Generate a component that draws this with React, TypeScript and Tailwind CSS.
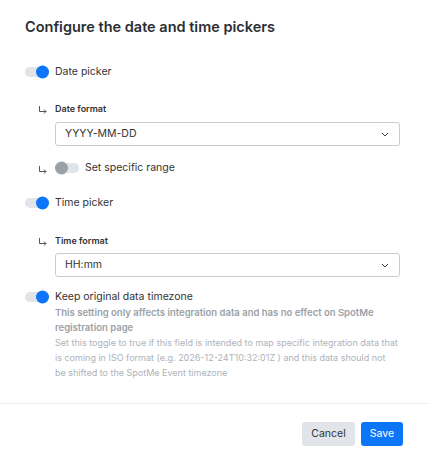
import React from "react";

function Toggle({ on }: { on: boolean }) {
  return (
    <div className="relative h-[10px] w-[24px] shrink-0 rounded-full bg-[#e1e4e8]">
      <div
        className={
          on
            ? "absolute right-0 top-1/2 h-[13px] w-[13px] -translate-y-1/2 rounded-full bg-[#0d75f8]"
            : "absolute left-0 top-1/2 h-[13px] w-[13px] -translate-y-1/2 rounded-full bg-[#9aa1a9]"
        }
      />
    </div>
  );
}

function Arrow() {
  return (
    <svg width="10" height="10" viewBox="0 0 10 10" className="mt-[3px] shrink-0 text-[#555]">
      <path d="M1.5 1 V6.5 H8 M6 4.5 L8 6.5 L6 8.5" fill="none" stroke="currentColor" strokeWidth="1" />
    </svg>
  );
}

function Select({ value }: { value: string }) {
  return (
    <div className="flex h-[24px] items-center justify-between rounded-[3px] border border-[#c9cdd2] bg-white pl-[9px] pr-[10px]">
      <span className="text-[10.5px] text-[#333]">{value}</span>
      <svg width="8" height="5" viewBox="0 0 8 5">
        <path d="M1 1 L4 4 L7 1" fill="none" stroke="#444" strokeWidth="1" />
      </svg>
    </div>
  );
}

export default function App() {
  return (
    <div
      className="h-[460px] w-[428px] bg-white text-[#333]"
      style={{ fontFamily: "Inter, 'Noto Sans', sans-serif" }}
    >
      <div className="px-[25px] pt-[17px]">
        <h1 className="text-[14.5px] font-semibold leading-[20px] text-[#2b2f33]">
          Configure the date and time pickers
        </h1>
        <div className="mt-[27px] flex items-center gap-[6px]">
          <Toggle on />
          <span className="text-[10.5px]">Date picker</span>
        </div>
        <div className="mt-[22px] flex items-center gap-[7px] pl-[13px]">
          <Arrow />
          <span className="text-[9px] font-semibold">Date format</span>
        </div>
        <div className="mt-[7px] pl-[30px] pr-[3px]">
          <Select value="YYYY-MM-DD" />
        </div>
        <div className="mt-[14px] flex items-center gap-[7px] pl-[13px]">
          <Arrow />
          <div className="flex items-center gap-[6px]">
            <Toggle on={false} />
            <span className="text-[10.5px]">Set specific range</span>
          </div>
        </div>
        <div className="mt-[19px] flex items-center gap-[6px]">
          <Toggle on />
          <span className="text-[10.5px]">Time picker</span>
        </div>
        <div className="mt-[23px] flex items-center gap-[7px] pl-[13px]">
          <Arrow />
          <span className="text-[9px] font-semibold">Time format</span>
        </div>
        <div className="mt-[6px] pl-[30px] pr-[3px]">
          <Select value="HH:mm" />
        </div>
        <div className="mt-[12px] flex items-center gap-[6px]">
          <Toggle on />
          <span className="text-[10.5px]">Keep original data timezone</span>
        </div>
        <div className="pl-[30px] leading-[15px]">
          <p className="text-[9.5px] font-semibold text-[#9ba1a8]">
            This setting only affects integration data and has no effect on SpotMe registration page
          </p>
          <p className="text-[9px] text-[#aeb3b9]">
            Set this toggle to true if this field is intended to map specific integration data that is coming in
            ISO format (e.g. 2026-12-24T10:32:01Z ) and this data should not
            <br />
            be shifted to the SpotMe Event timezone
          </p>
        </div>
      </div>
      <div className="mt-[23px] border-t border-[#eceef0]" />
      <div className="flex justify-end gap-[6px] pr-[25px] pt-[18px]">
        <button className="h-[24px] rounded-[3px] bg-[#e1e4e8] px-[9px] text-[10.5px] text-[#333]">Cancel</button>
        <button className="h-[24px] rounded-[3px] bg-[#0d75f8] px-[9px] text-[10.5px] text-white">Save</button>
      </div>
    </div>
  );
}
